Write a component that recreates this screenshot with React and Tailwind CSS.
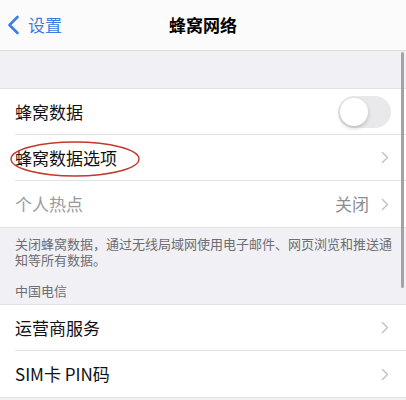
import React from "react";

const font = { fontFamily: '"Noto Sans CJK SC", "Noto Sans", sans-serif' };

function Chevron() {
  return (
    <svg width="8" height="13" viewBox="0 0 8 13" className="shrink-0">
      <path d="M1.5 1.5 L6.5 6.5 L1.5 11.5" fill="none" stroke="#c4c4c8" strokeWidth="1.5" strokeLinecap="round" strokeLinejoin="round" />
    </svg>
  );
}

function Row({ children, right, last, muted }) {
  return (
    <div className="bg-white pl-[15px]">
      <div className={`flex h-[46px] items-center pr-[17px] ${last ? "" : "border-b border-[#e2e2e4]"}`}>
        <span className={`flex-1 text-[17px] ${muted ? "text-[#9a9a9e]" : "text-[#111]"}`}>{children}</span>
        {right}
      </div>
    </div>
  );
}

export default function App() {
  return (
    <div className="relative h-[400px] w-[406px] overflow-hidden bg-[#f0f0f5]" style={font}>
      {/* Nav bar */}
      <div className="relative flex h-[51px] items-center border-b border-[#dcdce0] bg-[#fbfbfb]">
        <div className="flex items-center pl-[7px]">
          <svg width="13" height="20" viewBox="0 0 13 20">
            <path d="M10.5 2 L2.5 10 L10.5 18" fill="none" stroke="#3b7de0" strokeWidth="2.6" strokeLinecap="round" strokeLinejoin="round" />
          </svg>
          <span className="ml-[8px] text-[17px] text-[#3b7de0]">设置</span>
        </div>
        <div className="absolute inset-0 flex items-center justify-center pointer-events-none">
          <span className="text-[17px] font-semibold text-black">蜂窝网络</span>
        </div>
      </div>

      <div className="h-[37px]" />

      {/* Group 1 */}
      <div className="border-y border-[#e2e2e4]">
        <Row
          right={
            <div className="mr-[-2px] flex h-[32px] w-[53px] items-center rounded-full bg-[#e9e9eb] p-[2px]">
              <div className="h-[28px] w-[28px] rounded-full bg-white shadow-[0_2px_4px_rgba(0,0,0,0.2)]" />
            </div>
          }
        >
          蜂窝数据
        </Row>
        <Row right={<Chevron />}>蜂窝数据选项</Row>
        <Row
          muted
          last
          right={
            <div className="flex items-center gap-[12px]">
              <span className="text-[17px] text-[#8e8e93]">关闭</span>
              <Chevron />
            </div>
          }
        >
          个人热点
        </Row>
      </div>

      {/* Footer & header */}
      <div className="pl-[15px] pr-[8px] pt-[8px] text-[13px] leading-[16px] text-[#6d6d72]">
        关闭蜂窝数据，通过无线局域网使用电子邮件、网页浏览和推送通知等所有数据。
      </div>
      <div className="px-[15px] pt-[15px] pb-[5px] text-[13px] leading-[16px] text-[#6d6d72]">中国电信</div>

      {/* Group 2 */}
      <div className="border-y border-[#e2e2e4]">
        <Row right={<Chevron />}>运营商服务</Row>
        <Row right={<Chevron />} last>
          SIM卡 PIN码
        </Row>
      </div>

      {/* Red annotation ellipse */}
      <svg className="pointer-events-none absolute left-[9px] top-[140px]" width="132" height="38" viewBox="0 0 132 38">
        <ellipse cx="66" cy="19" rx="64" ry="17" fill="none" stroke="#c0392b" strokeWidth="1.4" />
      </svg>

      {/* Scroll indicator */}
      <div className="absolute right-[2px] top-[52px] h-[236px] w-[3px] rounded-full bg-[#a3a3a6]" />
    </div>
  );
}
